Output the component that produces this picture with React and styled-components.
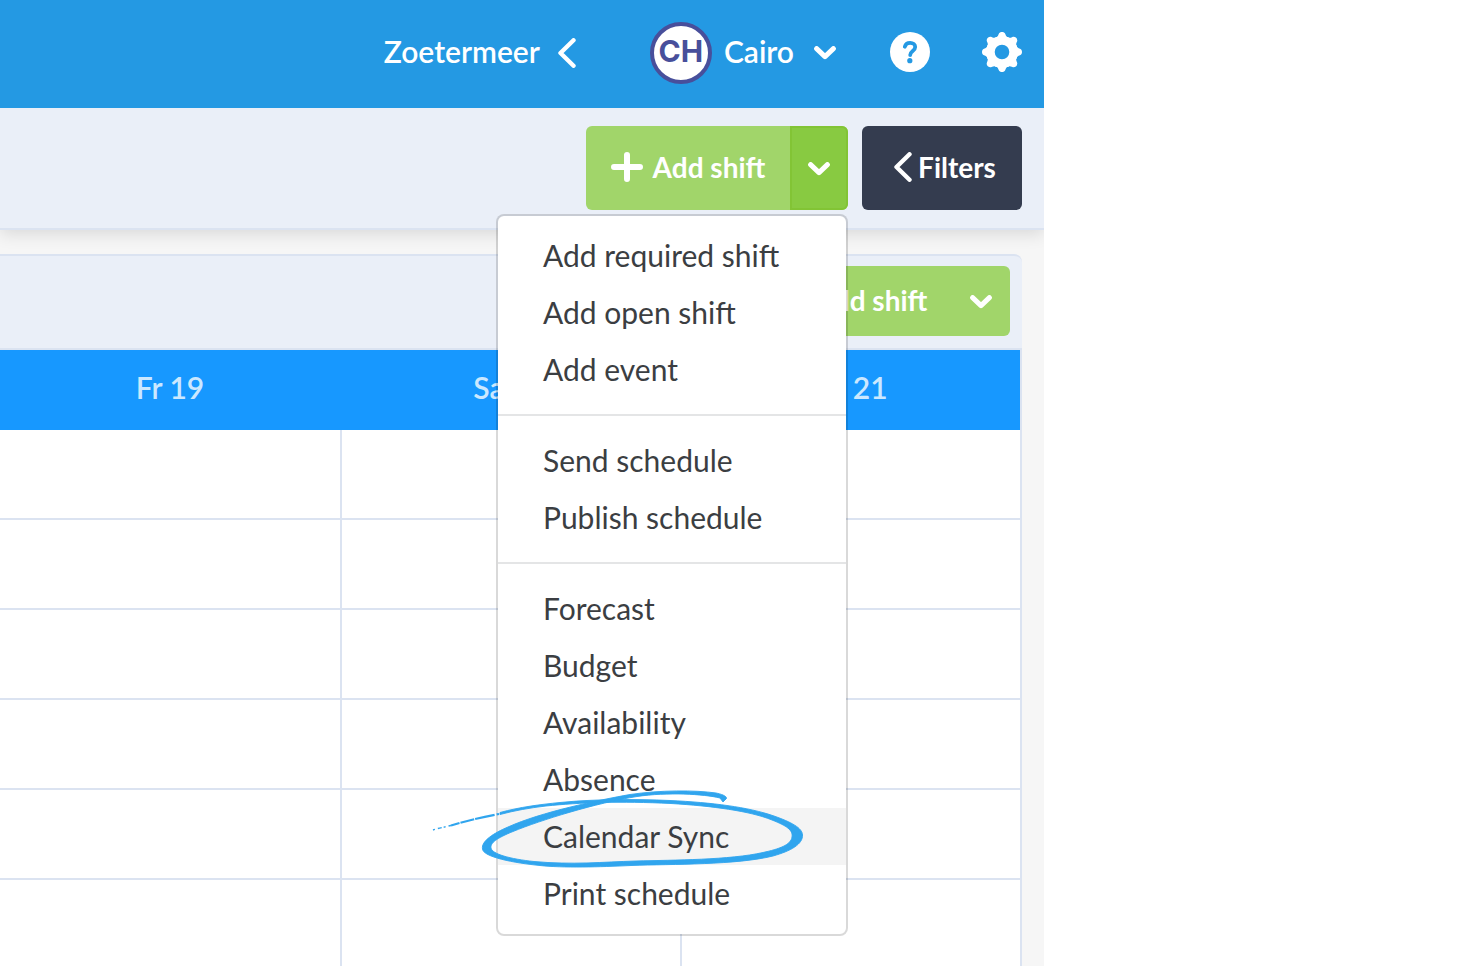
import React from 'react';
import styled, { createGlobalStyle } from 'styled-components';

const GlobalStyle = createGlobalStyle`
  * {
    box-sizing: border-box;
  }

  body {
    margin: 0;
    background-color: #ffffff;
    font-family: Lato, "Open Sans", sans-serif;
    font-size: 30px;
    line-height: 36px;
    color: #3b3e42;
  }

  button {
    font: inherit;
    color: inherit;
    border: none;
    background: none;
    padding: 0;
    cursor: pointer;
  }
`;

const Page = styled.div`
  display: grid;
  grid-template-columns: minmax(0, 1fr) 416px;
  min-height: 100vh;
`;

const Planner = styled.div`
  display: flex;
  flex-direction: column;
  background-color: #f6f6f6;
  overflow: hidden;
`;

const TopBar = styled.header`
  position: relative;
  z-index: 3;
  display: flex;
  align-items: center;
  justify-content: flex-end;
  gap: 52px;
  height: 108px;
  padding: 0 22px;
  background-color: #2499e3;
  color: #ffffff;
  font-weight: 600;
`;

const Label = styled.span`
  padding-bottom: 4px;
`;

const LocationButton = styled.button`
  display: flex;
  align-items: center;
  gap: 18px;
  margin-right: 22px;
  padding-bottom: 2px;
`;

const UserButton = styled.button`
  display: flex;
  align-items: center;
  gap: 12px;
  margin-right: 2px;
  padding-bottom: 2px;
`;

const UserName = styled(Label)`
  margin-right: 8px;
`;

const Avatar = styled.span`
  display: flex;
  align-items: center;
  justify-content: center;
  width: 62px;
  height: 62px;
  padding-bottom: 4px;
  border: 4px solid #484f9b;
  border-radius: 50%;
  background-color: #ffffff;
  color: #484f9b;
  font-family: Inter, sans-serif;
  font-weight: 700;
`;

const IconButton = styled.button`
  display: flex;
  padding-bottom: 4px;
`;

const Toolbar = styled.div`
  position: relative;
  z-index: 2;
  display: flex;
  justify-content: flex-end;
  gap: 14px;
  padding: 18px 22px;
  background-color: #eaeff8;
  border-bottom: 2px solid #dbe3f1;
  box-shadow: 0 4px 16px rgba(0, 0, 0, 0.12);
`;

const SplitButton = styled.div`
  position: relative;
  display: flex;
  height: ${(props) => (props.$small ? '70px' : '84px')};
  border-radius: 6px;
  background-color: #a1d56a;
  color: #ffffff;
  font-size: 28px;
  font-weight: 700;
`;

const AddButton = styled.button`
  display: flex;
  align-items: center;
  justify-content: center;
  gap: 10px;
  width: 204px;
  padding-bottom: 2px;
`;

const ToggleButton = styled.button`
  display: flex;
  align-items: center;
  justify-content: center;
  width: 58px;
  padding-top: 2px;
  border: 2px solid ${(props) => (props.$open ? '#82c435' : 'transparent')};
  border-radius: 0 6px 6px 0;
  background-color: ${(props) => (props.$open ? '#88ca41' : 'transparent')};
`;

const FiltersButton = styled.button`
  display: flex;
  align-items: center;
  justify-content: center;
  gap: 6px;
  width: 160px;
  padding: 0 0 2px 6px;
  border-radius: 6px;
  background-color: #343c4f;
  color: #ffffff;
  font-size: 28px;
  font-weight: 700;
`;

const Menu = styled.ul`
  position: absolute;
  top: 88px;
  right: 0;
  width: 352px;
  margin: 0;
  padding: 11px 0 12px;
  list-style: none;
  background-color: #ffffff;
  background-clip: padding-box;
  border: 2px solid rgba(0, 0, 0, 0.15);
  border-radius: 8px;
  color: #3b3e42;
  font-size: 30px;
  font-weight: 400;
`;

const MenuItem = styled.li`
  position: relative;
`;

const MenuLink = styled.a`
  display: block;
  padding: 10px 45px 11px;
  background-color: ${(props) => (props.$active ? '#f4f4f4' : 'transparent')};
  color: inherit;
  text-decoration: none;
`;

const Divider = styled.li`
  height: 2px;
  margin: 16px 0;
  background-color: #e4e5e6;
`;

const Scribble = styled.svg`
  position: absolute;
  top: -20px;
  left: -68px;
  width: 380px;
  height: 90px;
  pointer-events: none;
`;

const Board = styled.section`
  flex: 1;
  display: flex;
  flex-direction: column;
  margin: 24px 22px 0 0;
  border-top: 2px solid #dbe3f1;
  border-radius: 0 8px 0 0;
  background-color: #eaeff8;
`;

const BoardHeader = styled.div`
  display: flex;
  justify-content: flex-end;
  padding: 10px 12px 12px;
`;

const Schedule = styled.table`
  width: 100%;
  table-layout: fixed;
  border-spacing: 0;
  border-top: 2px solid #dbe3f1;
  border-right: 2px solid #dbe3f1;
  background-color: #ffffff;
`;

const DayHeading = styled.th`
  height: 80px;
  padding: 0 0 6px;
  background-color: #1798ff;
  color: #cbe8ff;
  font-weight: 600;
`;

const Slot = styled.td`
  height: 90px;
  padding: 0;
  border-bottom: 2px solid #dbe3f1;

  & + & {
    border-left: 2px solid #dbe3f1;
  }
`;

const days = ['Fr 19', 'Sa 20', 'Su 21'];
const rows = [1, 2, 3, 4, 5, 6];

const menuGroups = [
  ['Add required shift', 'Add open shift', 'Add event'],
  ['Send schedule', 'Publish schedule'],
  ['Forecast', 'Budget', 'Availability', 'Absence', 'Calendar Sync', 'Print schedule'],
];

const ChevronLeft = () => (
  <svg width="18" height="30" viewBox="0 0 18 30" fill="none" stroke="currentColor" strokeWidth="4.4" strokeLinecap="round" strokeLinejoin="round">
    <path d="M15.500 2.300 2.500 15l13 12.700" />
  </svg>
);

const ChevronDown = () => (
  <svg width="22" height="14" viewBox="0 0 22 14" fill="none" stroke="currentColor" strokeWidth="5" strokeLinecap="round" strokeLinejoin="round">
    <path d="m2.600 2.600 8.400 8 8.400-8" />
  </svg>
);

const PlusIcon = () => (
  <svg width="32" height="30" viewBox="0 0 32 30" fill="none" stroke="currentColor" strokeWidth="6" strokeLinecap="round">
    <path d="M3 15h26M16 3v24" />
  </svg>
);

const HelpIcon = () => (
  <svg width="40" height="40" viewBox="0 0 40 40" fill="none">
    <circle cx="20" cy="20" r="20" fill="#ffffff" />
    <path d="M14.800 14.700c.7-2.600 2.700-3.900 5.300-3.900 3 0 5.100 1.600 5.100 4.100 0 4.100-5 3.900-5 8.100" stroke="#2499e3" strokeWidth="3.8" strokeLinecap="round" />
    <circle cx="19.800" cy="28.700" r="2.600" fill="#2499e3" />
  </svg>
);

const GearIcon = () => (
  <svg width="40" height="40" viewBox="-20 -20 40 40" fill="currentColor">
    <defs>
      <path id="tooth" d="M-7 -14.2C-4.6 -14.6 -3.9 -16.2 -3.3 -18C-2.7 -19.4 -1.4 -20 0 -20S2.7 -19.4 3.3 -18C3.9 -16.2 4.6 -14.6 7 -14.2L4 -9H-4Z" />
    </defs>
    <circle r="11.6" fill="none" stroke="currentColor" strokeWidth="8.6" />
    {[0, 45, 90, 135, 180, 225, 270, 315].map((angle) => (
      <use key={angle} href="#tooth" transform={`rotate(${angle})`} />
    ))}
  </svg>
);

// Hand drawn ring around the highlighted menu entry
const Ring = () => (
  <Scribble viewBox="0 0 380 90" fill="#30a5ee" stroke="#30a5ee" aria-hidden="true">
    <path d="M21 37.500C36 33 52 29 69 26" fill="none" strokeWidth="2.200" strokeDasharray="9 1 14 1 20 2" />
    <path d="M3 42C9 40 15 39 21 37.500" fill="none" strokeWidth="1.500" strokeDasharray="2 3 4 2" />
    <path
      strokeWidth="0.9"
      strokeLinejoin="round"
      d="M70 24.500C90 19 110 16.500 130 14.500C165 11 205 11 240 12.500C282 14.500 318 19 344 28C361 34 372.500 40 372.500 47C373 56 361 63 343 68C307 77 243 76 201 77.500C170 79 132 80 110 77.500C84 75 53 69 52.500 61C51 53 64 45 78 39C111 24 169 12 200 6.500C230 2 265 2 286 5C291 6 297 8 296.500 10.500L293 14L290 10C274 6 237 4 207 8.500C166 15 111 32 83 43.500C67 50 60 55 61 60C62 66 80 71 104 73.500C142 77 173 74 206 73C244 72 300 72 333 64.500C349 61 361 57 362 49C363 42 357 38 342 32C320 23 282 18 241 15.500C190 13 150 14.500 116 18C99 20 85 22.500 70 26.500Z"
    />
  </Scribble>
);

const App = () => {
  return (
    <>
      <GlobalStyle />
      <Page>
        <Planner>
          <TopBar>
            <LocationButton type="button">
              <Label>Zoetermeer</Label>
              <ChevronLeft />
            </LocationButton>
            <UserButton type="button">
              <Avatar>CH</Avatar>
              <UserName>Cairo</UserName>
              <ChevronDown />
            </UserButton>
            <IconButton type="button" aria-label="Help">
              <HelpIcon />
            </IconButton>
            <IconButton type="button" aria-label="Settings">
              <GearIcon />
            </IconButton>
          </TopBar>

          <Toolbar>
            <SplitButton>
              <AddButton type="button">
                <PlusIcon />
                Add shift
              </AddButton>
              <ToggleButton type="button" $open aria-label="More actions" aria-expanded="true">
                <ChevronDown />
              </ToggleButton>
              <Menu>
                {menuGroups.map((group, index) => (
                  <React.Fragment key={index}>
                    {index > 0 && <Divider role="separator" />}
                    {group.map((label) => (
                      <MenuItem key={label}>
                        <MenuLink href="#" $active={label === 'Calendar Sync'}>{label}</MenuLink>
                        {label === 'Calendar Sync' && <Ring />}
                      </MenuItem>
                    ))}
                  </React.Fragment>
                ))}
              </Menu>
            </SplitButton>
            <FiltersButton type="button">
              <ChevronLeft />
              Filters
            </FiltersButton>
          </Toolbar>

          <Board>
            <BoardHeader>
              <SplitButton $small>
                <AddButton type="button">
                  <PlusIcon />
                  Add shift
                </AddButton>
                <ToggleButton type="button" aria-label="More shift actions">
                  <ChevronDown />
                </ToggleButton>
              </SplitButton>
            </BoardHeader>
            <Schedule>
              <thead>
                <tr>
                  {days.map((day) => (
                    <DayHeading key={day} scope="col">{day}</DayHeading>
                  ))}
                </tr>
              </thead>
              <tbody>
                {rows.map((row) => (
                  <tr key={row}>
                    {days.map((day) => (
                      <Slot key={day} />
                    ))}
                  </tr>
                ))}
              </tbody>
            </Schedule>
          </Board>
        </Planner>
      </Page>
    </>
  );
};

export default App;
